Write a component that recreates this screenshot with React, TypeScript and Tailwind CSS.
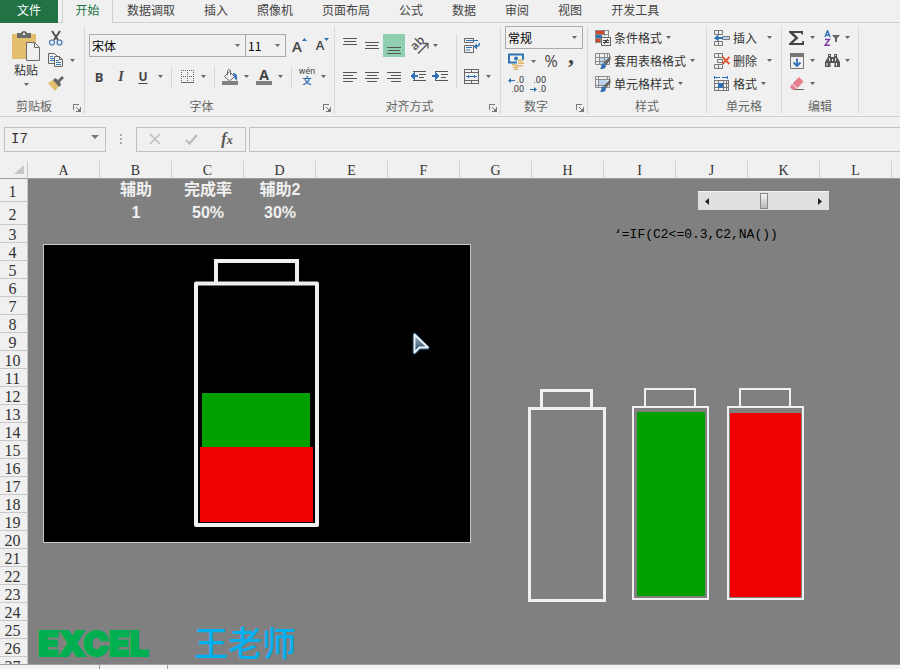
import { ReactNode, useState } from 'react';

const TABS = ['数据调取', '插入', '照像机', '页面布局', '公式', '数据', '审阅', '视图', '开发工具'];
const COLUMNS = ['A', 'B', 'C', 'D', 'E', 'F', 'G', 'H', 'I', 'J', 'K', 'L', 'M'];
const ROWS = Array.from({ length: 27 }, (_, i) => i + 1);

const CELLS: Record<string, string> = {
  B1: '辅助',
  C1: '完成率',
  D1: '辅助2',
  B2: '1',
  C2: '50%',
  D2: '30%',
};

function Caret() {
  return (
    <svg width="5" height="3" viewBox="0 0 5 3" className="shrink-0" aria-hidden="true">
      <path d="M0 0h5L2.5 3z" fill="#666" />
    </svg>
  );
}

function CaretButton({ label }: { label: string }) {
  return (
    <button aria-label={label} className="flex h-[23px] w-3 shrink-0 items-center justify-center">
      <Caret />
    </button>
  );
}

function IconButton({ label, className = 'w-5', children }: { label: string; className?: string; children: ReactNode }) {
  return (
    <button aria-label={label} className={`flex h-[23px] shrink-0 items-center justify-center ${className}`}>
      {children}
    </button>
  );
}

function Divider() {
  return <div className="mx-[5px] h-[22px] w-px shrink-0 bg-[#d8d8d8]" />;
}

interface GroupProps {
  title: string;
  className: string;
  launcher?: boolean;
  children: ReactNode;
}

function Group({ title, className, launcher, children }: GroupProps) {
  return (
    <section className={`flex h-[88px] shrink-0 flex-col border-r border-[#dadada] ${className}`}>
      <div className="h-[72px]">{children}</div>
      <div className="flex h-4 items-center">
        <h2 className="flex-1 text-center leading-4 text-[#666]">{title}</h2>
        {launcher && (
          <button aria-label={`${title}设置`} className="flex w-4 justify-end pt-1 pr-[3px]">
            <svg width="8" height="8" viewBox="0 0 8 8" fill="none" stroke="#777" shapeRendering="crispEdges">
              <path d="M.5 6V.5H6M3 3l3 3M7.5 3v4.5H3" />
              <path d="M4 7h3V4z" fill="#777" stroke="none" />
            </svg>
          </button>
        )}
      </div>
    </section>
  );
}

function Combo({ label, value, className }: { label: string; value: string; className: string }) {
  return (
    <label className={`relative block h-[23px] ${className}`}>
      <select
        aria-label={label}
        defaultValue={value}
        className="h-full w-full appearance-none border border-[#ababab] bg-[#f0f0f0] pl-0.5 text-xs leading-5 text-black"
      >
        <option>{value}</option>
      </select>
      <span className="pointer-events-none absolute top-2.5 right-1.5 flex">
        <Caret />
      </span>
    </label>
  );
}

function Lines({ rows }: { rows: [number, number, number][] }) {
  return (
    <svg width="16" height="16" viewBox="0 0 16 16" fill="#555" shapeRendering="crispEdges">
      {rows.map(([x, y, w]) => (
        <rect key={y} x={x} y={y} width={w} height="1" />
      ))}
    </svg>
  );
}

function PasteIcon() {
  return (
    <svg width="28" height="30" viewBox="0 0 28 30">
      <path d="M0 3h24v25H0z" fill="#e3be6c" />
      <path d="M5 2h4c0-1 1-2 3-2s3 1 3 2h4v5H5z" fill="#6b6b6b" />
      <path d="M11 2h2v2h-2z" fill="#f0f0f0" />
      <path d="M14.5 11.5h8l5 5v13h-13z" fill="#f0f0f0" stroke="#6b6b6b" />
      <path d="M22.5 11.5v5h5" fill="none" stroke="#6b6b6b" />
    </svg>
  );
}

function CutIcon() {
  return (
    <svg width="16" height="16" viewBox="0 0 16 16" fill="none">
      <path d="M4 1l6 9M12 1l-6 9" stroke="#555" strokeWidth="2" />
      <circle cx="4" cy="12.5" r="2.5" stroke="#3c77b8" strokeWidth="1.2" />
      <circle cx="11.5" cy="12.5" r="2.5" stroke="#3c77b8" strokeWidth="1.2" />
    </svg>
  );
}

function CopyIcon() {
  return (
    <svg width="16" height="15" viewBox="0 0 16 15">
      <path d="M.5.5h6l3 3v7h-9z" fill="#f0f0f0" stroke="#666" />
      <path d="M2 3.5h3M2 5.5h4M2 7.5h4" stroke="#3c77b8" />
      <path d="M6.5 3.5h5l3 3v7h-8z" fill="#f0f0f0" stroke="#666" />
      <path d="M11.5 3.5v3h3" fill="none" stroke="#666" />
      <path d="M8 7.5h3M8 9.5h5M8 11.5h5" stroke="#3c77b8" />
    </svg>
  );
}

function BrushIcon() {
  return (
    <svg width="16" height="15" viewBox="0 0 16 15">
      <path d="M0 7l5-3 6 6-4 5z" fill="#e3be6c" />
      <path d="M5 4l2-2 3 2 4-4 2 2-4 4 1 3-2 2z" fill="#666" />
    </svg>
  );
}

function BorderIcon() {
  return (
    <svg width="13" height="13" viewBox="0 0 13 13" shapeRendering="crispEdges" stroke="#666" strokeDasharray="1 1">
      <path d="M0 .5h13M0 6.5h13M.5 0v13M6.5 0v13M12.5 0v13" />
      <path d="M0 12.5h13" strokeDasharray="none" />
    </svg>
  );
}

function BucketIcon() {
  return (
    <svg width="16" height="16" viewBox="0 0 16 16">
      <path d="M2.5 7.5l5-5 5 5-5 4.5z" fill="#f0f0f0" stroke="#666" />
      <path d="M5.500 6V2c0-2 3-2 3 0v4" fill="none" stroke="#666" />
      <path d="M11 4c4 0 5 3 3.500 8L12 8z" fill="#3c77b8" />
      <path d="M0 12h16v4H0z" fill="#808080" />
    </svg>
  );
}

function OrientationIcon() {
  return (
    <svg width="19" height="18" viewBox="0 0 19 18" fill="none" stroke="#555">
      <text x="5" y="14" transform="rotate(-45 5 14)" fontSize="12" fontFamily="Open Sans" fontWeight="600" fill="#555" stroke="none">
        ab
      </text>
      <path d="M8 16.500l9-9M13 6.500h5v5" strokeWidth="1.300" />
    </svg>
  );
}

function IndentIcon({ right }: { right?: boolean }) {
  return (
    <svg width="17" height="11" viewBox="0 0 17 11" shapeRendering="crispEdges">
      <path d="M3 .5h13M9 3.5h7M9 6.5h5M3 9.5h13" stroke="#555" />
      {right ? (
        <path d="M0 4h3V1l5 4-5 4V6H0z" fill="#2f6fb5" />
      ) : (
        <path d="M8 4H5V1L0 5l5 4V6h3z" fill="#2f6fb5" />
      )}
    </svg>
  );
}

function WrapIcon() {
  return (
    <svg width="17" height="15" viewBox="0 0 17 15" fill="none">
      <path d="M.5.5h9v4h-9zM.5 7.5h9v7h-9z" stroke="#666" />
      <path d="M2 2.5h12M2 9.5h6M2 12h4" stroke="#2f6fb5" />
      <path d="M15.5 5c0 3-1 3.500-4 3.500" stroke="#2f6fb5" strokeWidth="1.500" />
      <path d="M13 5.500v6L9.500 8.500z" fill="#2f6fb5" />
    </svg>
  );
}

function MergeIcon() {
  return (
    <svg width="16" height="16" viewBox="0 0 16 16" fill="none" shapeRendering="crispEdges">
      <path d="M.5.5h14v14H.5zM.5 3.5h14M.5 11.5h14M7.5.5v3M7.5 11.5v3" stroke="#666" />
      <path d="M2 7.5h11M4.500 6v3M10.500 6v3" stroke="#2f6fb5" />
    </svg>
  );
}

function MoneyIcon() {
  return (
    <svg width="17" height="17" viewBox="0 0 17 17">
      <path d="M1 1.500h14v8H1z" fill="#f0f0f0" stroke="#2f75b5" strokeWidth="2" />
      <circle cx="8" cy="5.500" r="2" fill="#2f75b5" />
      <path d="M9 7h8v8h-4v2H4v-6h5z" fill="#f0f0f0" />
      <path d="M10 6.500h5v2h-5zM10 9.500h6v1.500h-6zM9 12h6v1.500H9zM4 11h5v1.500H4zM5 13.500h5V15H5zM6 15.500h4V17H6z" fill="#dfb566" />
    </svg>
  );
}

function DecimalIcon({ less }: { less?: boolean }) {
  return (
    <span className="relative block w-4 font-[Roboto] text-[9px] leading-[9px] text-[#333]">
      <span className="block text-right">{less ? '.00' : '.0'}</span>
      <span className="block text-right">{less ? '.0' : '.00'}</span>
      <svg width="7" height="5" viewBox="0 0 7 5" fill="#2f6fb5" className={less ? 'absolute bottom-0.5 left-0' : 'absolute top-0.5 left-0'}>
        {less ? <path d="M0 2h4V0l3 2.500L4 5V3H0z" /> : <path d="M7 2H3V0L0 2.500 3 5V3h4z" />}
      </svg>
    </span>
  );
}

function ConditionalIcon() {
  return (
    <svg width="16" height="16" viewBox="0 0 16 16" shapeRendering="crispEdges">
      <path d="M.5.5h13v12H.5zM5.500 0v13M9.500 0v6M0 4.500h14M0 8.500h7" fill="none" stroke="#888" />
      <path d="M1 1h8v3H1zM1 9h4v3H1z" fill="#d24726" />
      <path d="M1 5h6v3H1z" fill="#2f75b5" />
      <path d="M6.500 7.500h9v8h-9z" fill="#f0f0f0" stroke="#666" />
      <path d="M8 10.500h6M8 12.500h6M12.500 9l-3 5" stroke="#444" />
    </svg>
  );
}

function TableStyleIcon({ solid }: { solid?: boolean }) {
  return (
    <svg width="16" height="16" viewBox="0 0 16 16">
      <path d={solid ? 'M3 4h9v6H3z' : 'M5 5h8v7H5z'} fill="#bdd3ea" />
      <path
        d={solid ? 'M.5.5h14v11H.5zM0 3.5h15M3.5 0v12M12.5 0v4M0 9.5h12' : 'M.5.5h14v11H.5zM0 4.5h15M0 8.5h12M4.5 0v12M9.5 0v10M12.5 0v5'}
        fill="none"
        stroke="#8a8a8a"
      />
      <path d="M15.500 3v4L11 12 8.500 10z" fill="#666" />
      <path d="M8 10l3 2.500c0 3-3 3.500-6 3.500 2-2 1-5 3-6z" fill="#2f6fb5" />
    </svg>
  );
}

function InsertIcon() {
  return (
    <svg width="16" height="16" viewBox="0 0 16 16" fill="none" stroke="#777">
      <path d="M.5.5h8v4h-8zM4.5.5v4M.5 11.5h8v4h-8zM4.5 11v5" />
      <path d="M8.5 6.5h7v3h-7z" fill="#bdd3ea" />
      <path d="M9 7H4.5V4.5L0 8l4.500 3.500V9H9z" fill="#2f6fb5" stroke="none" />
    </svg>
  );
}

function DeleteIcon() {
  return (
    <svg width="16" height="16" viewBox="0 0 16 16" fill="none" stroke="#777">
      <path d="M.5.5h8v4h-8zM4.5.5v4M.5 11.5h8v4h-8zM4.5 11v5M3.5 6.5h5v3h-5z" />
      <path d="M8.500 4l7 7M15.500 4l-7 7" stroke="#e0552f" strokeWidth="1.800" />
    </svg>
  );
}

function FormatIcon() {
  return (
    <svg width="16" height="16" viewBox="0 0 16 16" fill="none" shapeRendering="crispEdges">
      <path d="M.5 0v3M13.5 0v3M1 1.5h5M8 1.5h5" stroke="#2f6fb5" />
      <path d="M.5 4.5h14v10H.5zM.5 7.5h14M.5 11.5h14M4.5 4.5v10M9.5 4.5v10M12.5 4.5v10" stroke="#777" />
      <path d="M4 7h5v5H4z" fill="#2f6fb5" />
    </svg>
  );
}

function SigmaIcon() {
  return (
    <svg width="16" height="16" viewBox="0 0 16 16">
      <path d="M0 1h14v3.500h-1.500L12 3H4.500l5 5-5.500 5H13l.5-2H15v4H0v-1.500L6 8 0 2.500z" fill="#444" />
    </svg>
  );
}

function SortIcon() {
  return (
    <svg width="16" height="16" viewBox="0 0 16 16" fill="none">
      <path d="M1 7l2.500-6.500L6 7M2 5h3" stroke="#2f6fb5" strokeWidth="1.400" />
      <path d="M1 9.500h4.500L1 15.300h5" stroke="#7b3fa0" strokeWidth="1.400" />
      <path d="M8 5h8l-3 3.500V12h-2V8.500z" fill="#666" />
    </svg>
  );
}

function FillDownIcon() {
  return (
    <svg width="14" height="16" viewBox="0 0 14 16">
      <path d="M.5.5h13v15H.5z" fill="#f0f0f0" stroke="#777" />
      <path d="M0 0h14v4H0z" fill="#777" />
      <path d="M7 5.500v7M3.500 9.500L7 13l3.500-3.500" fill="none" stroke="#2f6fb5" strokeWidth="1.800" />
    </svg>
  );
}

function FindIcon() {
  return (
    <svg width="15" height="14" viewBox="0 0 15 14" fill="#555">
      <path d="M3 0h3v3h3V0h3v3l3 5v5h-5.500V9h-4v4H0V8l3-5z" />
      <path d="M1.500 9h1v3h-1zM11 9h1v3h-1zM4 1h1v1H4zM10 1h1v1h-1zM4 4h1v3H4zM10 4h1v3h-1zM7 5h1v2H7z" fill="#f0f0f0" />
    </svg>
  );
}

function EraserIcon() {
  return (
    <svg width="14" height="14" viewBox="0 0 14 14">
      <path d="M9 0l4.500 4.500L7.500 11 2.500 6.500z" fill="#e57f8d" />
      <path d="M2 7.200l4.700 4.300L5.500 13H2.500L0 10z" fill="#e57f8d" />
      <path d="M5 12.500h9" stroke="#666" />
    </svg>
  );
}

function MenuRow({ icon, label, wide }: { icon: ReactNode; label: string; wide?: boolean }) {
  return (
    <button className="flex h-[23px] items-center pl-[7px] text-[#333]">
      {icon}
      <span className={wide ? 'mr-[10px] ml-[3px]' : 'mr-1 ml-[3px]'}>{label}</span>
      <Caret />
    </button>
  );
}

function Ribbon() {
  return (
    <div className="flex border-b border-[#d0d0d0] pt-[3px] pb-0.5">
      <Group title="剪贴板" className="w-[85px]" launcher>
        <div className="flex pl-[11px]">
          <button className="flex w-[30px] flex-col items-center pt-[5px] text-[#333]">
            <PasteIcon />
            <span className="mb-1 leading-[18px]">粘贴</span>
            <Caret />
          </button>
          <div className="ml-[5px] flex flex-col">
            <IconButton label="剪切"><CutIcon /></IconButton>
            <div className="flex">
              <IconButton label="复制"><CopyIcon /></IconButton>
              <CaretButton label="复制选项" />
            </div>
            <IconButton label="格式刷"><BrushIcon /></IconButton>
          </div>
        </div>
      </Group>

      <Group title="字体" className="w-[250px]" launcher>
        <div className="flex flex-col gap-2 pt-2">
          <div className="flex pl-1">
            <Combo label="字体名称" value="宋体" className="w-[157px]" />
            <Combo label="字号" value="11" className="-ml-px w-[41px]" />
            <div className="ml-0.5 flex text-[#444]">
              <IconButton label="增大字号" className="w-[23px]">
                <span className="font-[Open_Sans] text-[15px] font-semibold">A</span>
                <svg width="5" height="3" viewBox="0 0 5 3" className="mb-3"><path d="M0 3h5L2.500 0z" fill="#2f6fb5" /></svg>
              </IconButton>
              <IconButton label="减小字号" className="w-[23px]">
                <span className="font-[Open_Sans] text-[13px] font-semibold">A</span>
                <svg width="5" height="3" viewBox="0 0 5 3" className="mb-3"><path d="M0 0h5L2.500 3z" fill="#2f6fb5" /></svg>
              </IconButton>
            </div>
          </div>
          <div className="flex items-center pl-[3px] text-[#444]">
            <button className="w-[22px] font-[Open_Sans] text-[13px] leading-4 font-bold">B</button>
            <button className="w-[22px] font-[Liberation_Serif] text-sm leading-4 font-bold italic">I</button>
            <button className="w-[22px] font-[Open_Sans] text-xs leading-4 font-bold underline underline-offset-2">U</button>
            <CaretButton label="下划线选项" />
            <Divider />
            <IconButton label="边框"><BorderIcon /></IconButton>
            <CaretButton label="边框选项" />
            <Divider />
            <IconButton label="填充颜色"><BucketIcon /></IconButton>
            <CaretButton label="填充颜色选项" />
            <IconButton label="字体颜色" className="ml-0.5 w-5">
              <span className="h-4 w-4 border-b-4 border-[#808080] font-[Open_Sans] text-sm leading-[12px] font-bold">A</span>
            </IconButton>
            <CaretButton label="字体颜色选项" />
            <Divider />
            <IconButton label="拼音" className="w-5 flex-col">
              <span className="font-[Roboto] text-[9px] leading-[9px]">wén</span>
              <span className="text-[9px] leading-[10px] font-bold text-[#2f6fb5]">文</span>
            </IconButton>
            <CaretButton label="拼音选项" />
          </div>
        </div>
      </Group>

      <Group title="对齐方式" className="w-[166px]" launcher>
        <div className="flex pt-2">
          <div className="flex w-[122px] flex-col gap-2 border-r border-[#dadada] pl-1">
            <div className="flex">
              <IconButton label="顶端对齐" className="w-[22px]"><Lines rows={[[1, 0, 14], [2, 3, 12], [1, 6, 14]]} /></IconButton>
              <IconButton label="垂直居中" className="w-[22px]"><Lines rows={[[1, 4, 14], [2, 7, 12], [1, 10, 14]]} /></IconButton>
              <IconButton label="底端对齐" className="w-[22px] bg-[#8fceae]"><Lines rows={[[1, 9, 14], [2, 12, 12], [1, 15, 14]]} /></IconButton>
              <IconButton label="方向" className="ml-1 w-5"><OrientationIcon /></IconButton>
              <CaretButton label="方向选项" />
            </div>
            <div className="flex">
              <IconButton label="左对齐" className="w-[22px]"><Lines rows={[[1, 3, 14], [1, 6, 10], [1, 9, 14], [1, 12, 10]]} /></IconButton>
              <IconButton label="居中" className="w-[22px]"><Lines rows={[[1, 3, 14], [3, 6, 10], [1, 9, 14], [3, 12, 10]]} /></IconButton>
              <IconButton label="右对齐" className="w-[22px]"><Lines rows={[[1, 3, 14], [5, 6, 10], [1, 9, 14], [5, 12, 10]]} /></IconButton>
              <IconButton label="减少缩进量" className="ml-0.5 w-[22px]"><IndentIcon /></IconButton>
              <IconButton label="增加缩进量" className="w-[22px]"><IndentIcon right /></IconButton>
            </div>
          </div>
          <div className="flex flex-col gap-2 pl-[5px]">
            <IconButton label="自动换行"><WrapIcon /></IconButton>
            <div className="flex">
              <IconButton label="合并后居中"><MergeIcon /></IconButton>
              <CaretButton label="合并选项" />
            </div>
          </div>
        </div>
      </Group>

      <Group title="数字" className="w-[87px]" launcher>
        <div className="pl-1">
          <Combo label="数字格式" value="常规" className="w-[78px]" />
          <div className="flex items-center text-[#444]">
            <IconButton label="会计数字格式" className="w-[22px]"><MoneyIcon /></IconButton>
            <CaretButton label="会计选项" />
            <button className="w-6 font-[Open_Sans] text-base leading-5">%</button>
            <button className="w-4 pb-3 font-[Liberation_Serif] text-2xl leading-3 font-bold">,</button>
          </div>
          <div className="flex">
            <IconButton label="增加小数位数" className="w-[22px]"><DecimalIcon /></IconButton>
            <IconButton label="减少小数位数" className="w-[22px]"><DecimalIcon less /></IconButton>
          </div>
        </div>
      </Group>

      <Group title="样式" className="w-[119px]">
        <MenuRow icon={<ConditionalIcon />} label="条件格式" />
        <MenuRow icon={<TableStyleIcon />} label="套用表格格式" />
        <MenuRow icon={<TableStyleIcon solid />} label="单元格样式" />
      </Group>

      <Group title="单元格" className="w-[75px]">
        <MenuRow icon={<InsertIcon />} label="插入" wide />
        <MenuRow icon={<DeleteIcon />} label="删除" wide />
        <MenuRow icon={<FormatIcon />} label="格式" />
      </Group>

      <Group title="编辑" className="w-[77px]">
        <div className="flex pl-1.5">
          <IconButton label="自动求和" className="w-[18px]"><SigmaIcon /></IconButton>
          <CaretButton label="求和选项" />
          <IconButton label="排序和筛选" className="ml-[5px] w-[18px]"><SortIcon /></IconButton>
          <CaretButton label="排序选项" />
        </div>
        <div className="flex pl-1.5">
          <IconButton label="填充" className="w-[18px]"><FillDownIcon /></IconButton>
          <CaretButton label="填充选项" />
          <IconButton label="查找和选择" className="ml-[5px] w-[18px]"><FindIcon /></IconButton>
          <CaretButton label="查找选项" />
        </div>
        <div className="flex pl-1.5">
          <IconButton label="清除" className="w-[18px]"><EraserIcon /></IconButton>
          <CaretButton label="清除选项" />
        </div>
      </Group>
    </div>
  );
}

function FormulaBar() {
  return (
    <div className="flex h-11 shrink-0 items-center pl-1">
      <div className="flex h-[25px] w-[102px] items-center border border-[#c0c0c0] pr-1.5">
        <input aria-label="名称框" defaultValue="I7" className="w-full min-w-0 bg-transparent pl-1.5 font-[Liberation_Mono] text-sm text-[#333] outline-none" />
        <svg width="8" height="4" viewBox="0 0 8 4" className="mb-1 shrink-0"><path d="M0 0h8L4 4z" fill="#777" /></svg>
      </div>
      <svg width="30" height="12" viewBox="0 0 30 12" fill="#aaa" shapeRendering="crispEdges">
        <path d="M14 1h2v2h-2zM14 5h2v2h-2zM14 9h2v2h-2z" />
      </svg>
      <div className="flex h-[25px] w-[110px] border border-[#c0c0c0]">
        <IconButton label="取消" className="w-9">
          <svg width="12" height="12" viewBox="0 0 12 12" fill="none" stroke="#bbb" strokeWidth="1.500"><path d="M1 1l10 10M11 1L1 11" /></svg>
        </IconButton>
        <IconButton label="输入" className="w-9">
          <svg width="13" height="11" viewBox="0 0 13 11" fill="none" stroke="#bbb" strokeWidth="2.200"><path d="M1 6l3.500 3.500L12 1" /></svg>
        </IconButton>
        <IconButton label="插入函数" className="w-9">
          <span className="font-[Liberation_Serif] text-base leading-4 font-bold text-[#555] italic">
            f<span className="text-xs">x</span>
          </span>
        </IconButton>
      </div>
      <input aria-label="编辑栏" className="ml-[3px] h-[25px] min-w-0 flex-1 border border-r-0 border-[#c0c0c0] bg-transparent px-2 outline-none" />
    </div>
  );
}

function Grid() {
  return (
    <table className="w-[964px] table-fixed border-separate border-spacing-0">
      <colgroup>
        <col className="w-7" />
        {COLUMNS.map((c) => (
          <col key={c} className="w-[72px]" />
        ))}
      </colgroup>
      <thead>
        <tr className="h-[18px] bg-[#f0f0f0]">
          <td className="border-r border-b border-[#c8c8c8] border-b-[#9b9b9b] p-0">
            <svg width="10" height="9" viewBox="0 0 10 9" className="ml-auto mr-[3px]"><path d="M10 0v9H0z" fill="#c8c8c8" /></svg>
          </td>
          {COLUMNS.map((c) => (
            <th key={c} scope="col" className="border-r border-b border-[#d0d0d0] border-b-[#9b9b9b] p-0 pt-[3px] font-[Liberation_Serif] text-sm leading-[14px] font-normal text-[#333]">
              {c}
            </th>
          ))}
        </tr>
      </thead>
      <tbody>
        {ROWS.map((r) => (
          <tr key={r} className={r < 3 ? 'h-[23px]' : 'h-[18px]'}>
            <th scope="row" className="border-r border-b border-[#c8c8c8] bg-[#f0f0f0] p-0 pt-0.5 pr-0.5 font-[Liberation_Serif] text-base leading-[15px] font-normal text-[#333]">
              {r}
            </th>
            {COLUMNS.map((c) => (
              <td key={c} className="p-0 pb-0.5 text-center font-['Liberation_Sans','Noto_Sans_CJK_SC',sans-serif] text-base leading-4 font-bold text-[#f0f0f0]">
                {c + r === 'I3' ? (
                  <span className="block pt-[3px] pl-[10px] text-left font-[Liberation_Mono] text-[13px] leading-[13px] font-normal whitespace-nowrap text-black">
                    ‘=IF(C2&lt;=0.3,C2,NA())
                  </span>
                ) : (
                  CELLS[c + r]
                )}
              </td>
            ))}
          </tr>
        ))}
      </tbody>
    </table>
  );
}

function ScrollControl() {
  const [value, setValue] = useState(50);
  return (
    <div className="absolute top-[30px] left-[698px] flex h-[19px] w-[131px] border-t border-[#f4f4f4] bg-[#e0e0e0]">
      <button aria-label="减少" onClick={() => setValue(value - 1)} className="flex w-[18px] items-center justify-center">
        <svg width="4" height="7" viewBox="0 0 4 7"><path d="M4 0v7L0 3.500z" fill="#222" /></svg>
      </button>
      <input
        type="range"
        aria-label="完成率"
        value={value}
        onChange={(e) => setValue(Number(e.target.value))}
        className="h-[18px] min-w-0 flex-1 appearance-none bg-transparent [&::-webkit-slider-thumb]:h-4 [&::-webkit-slider-thumb]:w-2 [&::-webkit-slider-thumb]:appearance-none [&::-webkit-slider-thumb]:border [&::-webkit-slider-thumb]:border-[#888] [&::-webkit-slider-thumb]:bg-linear-to-b [&::-webkit-slider-thumb]:from-[#f4f4f4] [&::-webkit-slider-thumb]:to-[#b8b8bc]"
      />
      <button aria-label="增加" onClick={() => setValue(value + 1)} className="flex w-[18px] items-center justify-center">
        <svg width="4" height="7" viewBox="0 0 4 7"><path d="M0 0v7l4-3.500z" fill="#222" /></svg>
      </button>
    </div>
  );
}

function BatteryChart() {
  return (
    <div className="absolute top-[83px] left-[43px] border border-[#c8c8c8] bg-black">
      <svg width="426" height="297" viewBox="0 0 426 297">
        <defs>
          <linearGradient id="pointer" x1="0" y1="0" x2="0" y2="1">
            <stop offset="0" stopColor="#a9b8c6" />
            <stop offset="1" stopColor="#1d4468" />
          </linearGradient>
        </defs>
        <g fill="none" stroke="#f0f0f0">
          <path d="M172 38V16h81v22" strokeWidth="4" />
          <path d="M152 38.500h121V280H152z" strokeWidth="4" strokeLinejoin="round" />
        </g>
        <path d="M158 148h108v54H158z" fill="#00a000" />
        <path d="M156 202h113v75H156z" fill="#f00000" />
        {/* mouse pointer */}
        <g transform="translate(369 88)">
          <path d="M1.500 1.500v18l5-4.500h8z" fill="none" stroke="#2d6ca8" strokeWidth="4" strokeLinejoin="round" opacity=".6" />
          <path d="M1.500 1.500v18l5-5h8.500z" fill="url(#pointer)" stroke="#f0f4f8" strokeWidth="1.800" strokeLinejoin="round" />
        </g>
      </svg>
    </div>
  );
}

function Batteries() {
  return (
    <svg width="280" height="216" viewBox="0 0 280 216" className="absolute top-[226px] left-[527px]" fill="none" stroke="#f0f0f0">
      <path d="M14.500 20V3.500h50V20M2.500 21.500h75v192h-75z" strokeWidth="3" />
      <path d="M118 19V2h50v17M106 20h75v192h-75z" strokeWidth="2" />
      <rect x="110" y="25" width="68" height="184" rx="1" fill="#00a000" stroke="none" />
      <path d="M213 19V2h50v17M201 20h75v192h-75z" strokeWidth="2" />
      <rect x="203" y="26" width="71" height="184" rx="1" fill="#f00000" stroke="none" />
    </svg>
  );
}

export default function App() {
  return (
    <div className="flex h-screen flex-col overflow-hidden bg-[#f0f0f0] font-['Noto_Sans_CJK_SC',sans-serif] text-xs text-[#444]">
      <nav className="flex h-[23px] shrink-0 leading-5">
        <button className="w-[58px] bg-[#217346] pb-[3px] text-white">文件</button>
        <div className="w-1 border-b border-[#d0d0d0]" />
        <button className="w-[51px] border-x border-[#d0d0d0] pb-[3px] text-[#217346]">开始</button>
        <div className="flex flex-1 gap-[29px] border-b border-[#d0d0d0] pl-[14px]">
          {TABS.map((t) => (
            <button key={t} className="shrink-0 pb-0.5">{t}</button>
          ))}
        </div>
      </nav>
      <Ribbon />
      <FormulaBar />
      <main className="relative min-h-0 flex-1 overflow-hidden bg-[#808080]">
        <Grid />
        <ScrollControl />
        <BatteryChart />
        <Batteries />
        <div className="absolute top-[459px] left-[38px] flex">
          <span className="w-[156px] font-[Inter] text-[34px] leading-[48px] font-black text-[#00b050] [-webkit-text-stroke:2px_#00b050]">EXCEL</span>
          <span className="text-[34px] leading-[44px] font-medium text-[#00b0f0]">王老师</span>
        </div>
      </main>
      <footer className="flex h-[5px] shrink-0 border-t border-[#a0a0a0] pl-[99px]">
        <div className="w-[69px] border-x border-[#a0a0a0] bg-[#f4f4f4]" />
      </footer>
    </div>
  );
}
